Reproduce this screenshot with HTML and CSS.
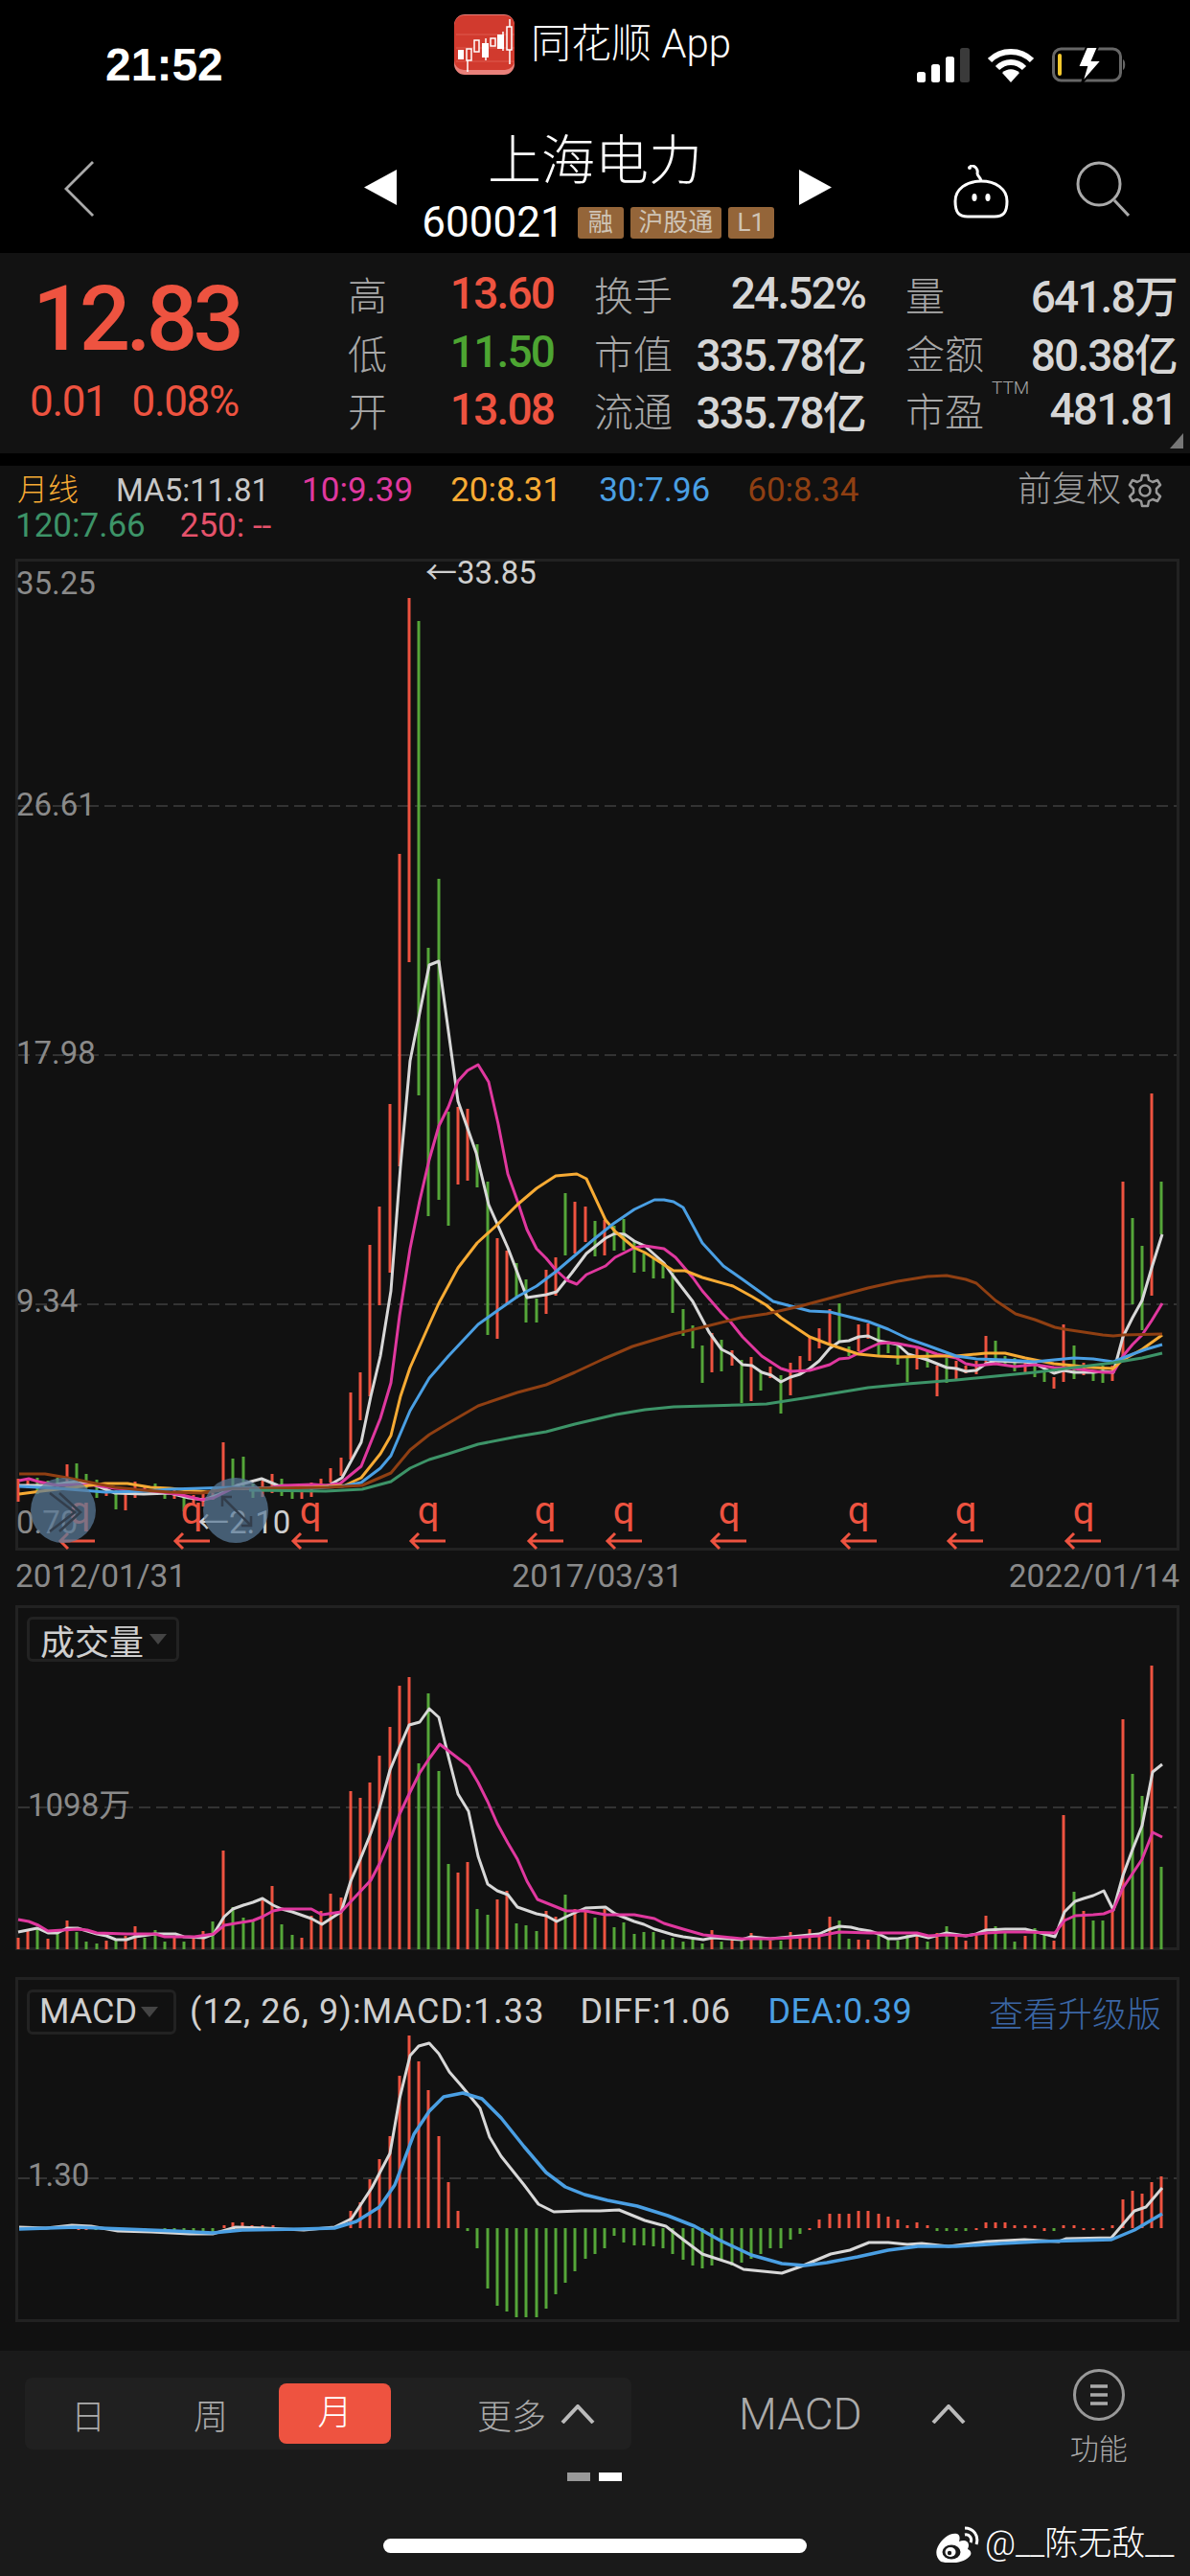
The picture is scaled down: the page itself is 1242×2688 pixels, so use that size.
FILE: index.html
```html
<!DOCTYPE html>
<html lang="zh-CN">
<head>
  <meta charset="UTF-8">
  <title>上海电力</title>
  <link rel="stylesheet" href="styles.css">
</head>
<body>
  <!-- 状态栏 -->
  <div class="status-bar">
    <div class="time">21:52</div>
    <div class="app-name">
      <svg class="app-icon" viewBox="0 0 63 63">
        <rect width="63" height="63" rx="11" fill="#e9807a"/>
        <rect y="1" width="63" height="57" rx="10" fill="#d13a2e"/>
        <path d="M2 35H63M2 21H63M2 49H63" stroke="#dd5a4e" stroke-width="1"/>
        <path d="M14 42V60M33 25V48M51 18V38M58 5V52" stroke="#fff" stroke-width="1.5"/>
        <rect x="4" y="37" width="6" height="10" fill="#fff"/>
        <rect x="13" y="36" width="5" height="12" fill="#d13a2e" stroke="#fff" stroke-width="1.5"/>
        <rect x="21" y="27" width="5" height="12" fill="#d13a2e" stroke="#fff" stroke-width="1.5"/>
        <rect x="29" y="30" width="7" height="15" fill="#fff"/>
        <rect x="38" y="25" width="5" height="8" fill="#d13a2e" stroke="#fff" stroke-width="1.5"/>
        <rect x="45" y="21" width="7" height="15" fill="#fff"/>
        <rect x="55" y="13" width="5" height="24" fill="#d13a2e" stroke="#fff" stroke-width="1.5"/>
      </svg>
      <span>同花顺 App</span>
    </div>
    <div class="status-icons">
      <svg class="signal" viewBox="0 0 55 36">
        <rect x="0" y="25" width="9" height="11" rx="2.5" fill="#fff"/>
        <rect x="15" y="17" width="9" height="19" rx="2.5" fill="#fff"/>
        <rect x="30" y="9" width="9" height="27" rx="2.5" fill="#fff"/>
        <rect x="45" y="0" width="10" height="36" rx="2.5" fill="#3a3a3a"/>
      </svg>
      <svg class="wifi" viewBox="0 0 48 36">
        <path d="M2 13C14 1 34 1 46 13" fill="none" stroke="#fff" stroke-width="6"/>
        <path d="M10 21C18 13 30 13 38 21" fill="none" stroke="#fff" stroke-width="6"/>
        <path d="M15 26C20 21 28 21 33 26L24 36Z" fill="#fff"/>
      </svg>
      <svg class="battery" viewBox="0 0 78 38">
        <rect x="1.5" y="2" width="70" height="33" rx="8" fill="none" stroke="#666" stroke-width="3"/>
        <rect x="6" y="7" width="4" height="23" rx="2" fill="#f5c92e"/>
        <path d="M74 13C77 14 77 23 74 24Z" fill="#666"/>
        <path d="M36 0H48L42 14H52L31 38L36 21H27Z" fill="#fff" stroke="#000" stroke-width="2"/>
      </svg>
    </div>
  </div>

  <!-- 标题栏 -->
  <div class="nav-bar">
    <div class="nav-left">
      <svg class="back" viewBox="0 0 32 60"><path d="M31 1L2 30L31 59" fill="none" stroke="#aaa" stroke-width="3"/></svg>
    </div>
    <div class="nav-center">
      <svg class="switch" viewBox="0 0 34 37"><path d="M34 0V37L0 18.5Z" fill="#fff"/></svg>
      <div class="stock">
        <div class="stock-name">上海电力</div>
        <div class="stock-code">
          <span class="code">600021</span>
          <span class="tag">融</span><span class="tag tag-wide">沪股通</span><span class="tag">L1</span>
        </div>
      </div>
      <svg class="switch" viewBox="0 0 34 37"><path d="M0 0V37L34 18.5Z" fill="#fff"/></svg>
    </div>
    <div class="nav-right">
      <svg class="robot" viewBox="0 0 60 56">
        <path d="M18 1C24 0 27 5 26 9C26 12 30 13 30 17" fill="none" stroke="#fff" stroke-width="3"/>
        <circle cx="18" cy="3" r="2" fill="#fff"/>
        <path d="M3 38C3 25 15 17 30 17C45 17 57 25 57 38C57 50 53 54 44 54H16C7 54 3 50 3 38Z" fill="none" stroke="#fff" stroke-width="3"/>
        <ellipse cx="23" cy="34" rx="2.6" ry="4" fill="#fff"/>
        <ellipse cx="37" cy="34" rx="2.6" ry="4" fill="#fff"/>
      </svg>
      <svg class="search" viewBox="0 0 56 58">
        <circle cx="24" cy="24" r="22" fill="none" stroke="#aaa" stroke-width="3"/>
        <path d="M40 41L55 57" stroke="#aaa" stroke-width="3"/>
      </svg>
    </div>
  </div>

  <!-- 报价 -->
  <div class="quote">
    <div class="price-box">
      <div class="price">12.83</div>
      <div class="change"><span>0.01</span><span>0.08%</span></div>
    </div>
    <div class="stats">
      <div class="stat stat-short"><span class="stat-label">高</span><span class="stat-value up">13.60</span></div>
      <div class="stat"><span class="stat-label">换手</span><span class="stat-value">24.52%</span></div>
      <div class="stat"><span class="stat-label">量</span><span class="stat-value">641.8万</span></div>
      <div class="stat stat-short"><span class="stat-label">低</span><span class="stat-value down">11.50</span></div>
      <div class="stat"><span class="stat-label">市值</span><span class="stat-value">335.78亿</span></div>
      <div class="stat"><span class="stat-label">金额</span><span class="stat-value">80.38亿</span></div>
      <div class="stat stat-short"><span class="stat-label">开</span><span class="stat-value up">13.08</span></div>
      <div class="stat"><span class="stat-label">流通</span><span class="stat-value">335.78亿</span></div>
      <div class="stat"><span class="stat-label">市盈<sup class="ttm">TTM</sup></span><span class="stat-value">481.81</span></div>
    </div>
    <div class="corner"></div>
  </div>

  <div class="chart-area">
    <!-- 均线图例 -->
    <div class="legend">
      <div class="legend-row">
        <span class="legend-type">月线</span>
        <span class="ma5">MA5:11.81</span>
        <span class="ma10">10:9.39</span>
        <span class="ma20">20:8.31</span>
        <span class="ma30">30:7.96</span>
        <span class="ma60">60:8.34</span>
        <span class="adjust">前复权
          <svg class="gear" viewBox="0 0 36 36">
            <path d="M15 2H21L22 7L26 9L31 7L34 12L30 16V20L34 24L31 29L26 27L22 29L21 34H15L14 29L10 27L5 29L2 24L6 20V16L2 12L5 7L10 9L14 7Z" fill="none" stroke="#999" stroke-width="2.5" stroke-linejoin="round"/>
            <circle cx="18" cy="18" r="5.5" fill="none" stroke="#999" stroke-width="2.5"/>
          </svg>
        </span>
      </div>
      <div class="legend-row">
        <span class="ma120">120:7.66</span>
        <span class="ma250">250: --</span>
      </div>
    </div>

    <!-- K线主图 -->
    <div class="frame frame-main">
      <svg class="plot" width="1209" height="1029" viewBox="19 586 1209 1029">
        <path class="grid-line" d="M19 841H1228M19 1101H1228M19 1361H1228"/>
        <path class="bars-up" d="M19 1543V1567M29 1545V1553M70 1528V1552M111 1550V1561M131 1558V1576M141 1546V1563M151 1550V1556M182 1555V1564M202 1560V1570M212 1558V1572M222 1558V1565M233 1505V1555M274 1545V1562M284 1538V1558M315 1557V1564M325 1547V1562M335 1543V1553M345 1532V1547M356 1521V1540M366 1453V1523M376 1432V1482M386 1299V1457M396 1259V1362M407 1152V1328M417 891V1217M427 624V1004M478 1155V1236M488 1157V1232M519 1292V1397M529 1305V1360M570 1325V1371M580 1312V1352M600 1254V1308M611 1259V1296M631 1273V1310M743 1391V1432M764 1409V1425M784 1416V1462M804 1426V1438M825 1422V1456M835 1415V1435M845 1395V1420M855 1386V1407M866 1366V1402M896 1382V1410M906 1381V1397M957 1407V1429M978 1425V1457M998 1420V1439M1008 1425V1433M1019 1420V1434M1029 1394V1425M1070 1422V1432M1100 1437V1449M1110 1382V1442M1131 1422V1435M1161 1425V1441M1172 1233V1420M1202 1141V1352"/>
        <path class="bars-down" d="M39 1542V1559M50 1545V1556M60 1542V1552M80 1527V1550M90 1538V1553M101 1544V1563M121 1555V1575M162 1548V1558M172 1555V1564M192 1562V1577M243 1522V1553M254 1520V1555M264 1548V1563M294 1543V1561M305 1555V1564M437 648V1143M447 989V1269M458 917V1252M468 1160V1279M498 1194V1239M509 1233V1393M539 1318V1355M549 1335V1380M560 1355V1380M590 1245V1310M621 1274V1311M641 1279V1305M651 1272V1305M662 1295V1328M672 1308V1327M682 1313V1334M692 1318V1334M702 1328V1370M713 1366V1394M723 1383V1407M733 1404V1443M753 1398V1431M774 1419V1464M794 1430V1451M815 1435V1475M876 1360V1399M886 1405V1415M917 1385V1415M927 1400V1412M937 1404V1424M947 1417V1442M968 1410V1427M988 1417V1443M1039 1399V1420M1049 1415V1425M1059 1417V1431M1080 1420V1437M1090 1430V1442M1121 1404V1439M1141 1430V1441M1151 1425V1443M1182 1271V1361M1192 1300V1388M1212 1233V1288"/>
        <polyline class="line line-ma5" points="20,1550 53,1550 70,1547 83,1546 100,1550 120,1558 150,1559 177,1558 197,1563 213,1565 227,1560 247,1550 273,1543 290,1550 310,1551 343,1550 357,1542 377,1505 387,1457 397,1415 408,1347 418,1217 428,1107 448,1007 458,1003 478,1149 497,1203 510,1257 530,1302 550,1354 570,1351 581,1348 597,1328 612,1308 632,1292 642,1287 652,1288 662,1295 673,1300 693,1318 703,1332 723,1358 740,1390 753,1408 763,1413 775,1424 785,1425 795,1432 805,1435 815,1442 825,1437 835,1434 845,1428 855,1420 866,1407 876,1400 886,1399 896,1395 906,1394 917,1399 937,1403 948,1413 968,1419 978,1423 988,1427 998,1428 1008,1431 1019,1430 1029,1423 1039,1420 1059,1421 1070,1421 1080,1423 1090,1428 1100,1433 1110,1430 1121,1432 1141,1432 1151,1431 1162,1432 1172,1395 1182,1375 1192,1357 1202,1323 1213,1288"/>
        <polyline class="line line-ma10" points="20,1545 30,1543 40,1546 60,1550 80,1549 100,1550 120,1553 150,1555 170,1557 190,1560 210,1565 223,1563 243,1553 277,1553 297,1550 327,1549 340,1550 355,1548 377,1530 397,1480 408,1443 417,1373 428,1303 438,1253 448,1210 458,1175 468,1155 478,1128 488,1117 499,1111 510,1129 520,1173 530,1225 540,1253 550,1283 560,1303 570,1313 580,1325 592,1336 602,1340 612,1330 632,1321 642,1312 662,1302 673,1300 693,1303 705,1312 723,1333 733,1347 753,1370 763,1380 775,1395 795,1415 815,1428 825,1431 845,1430 866,1424 876,1418 886,1417 896,1412 906,1407 917,1402 927,1401 937,1402 958,1406 978,1413 998,1417 1008,1423 1019,1425 1039,1423 1059,1426 1080,1424 1100,1427 1121,1428 1151,1432 1162,1432 1172,1415 1182,1403 1192,1393 1202,1378 1213,1360"/>
        <polyline class="line line-ma20" points="20,1559 43,1556 77,1552 110,1548 133,1548 157,1552 177,1553 197,1555 217,1557 237,1553 277,1553 327,1552 360,1550 377,1542 397,1517 408,1498 418,1457 428,1427 448,1382 458,1360 478,1323 498,1297 520,1277 540,1257 560,1240 580,1227 602,1225 612,1230 632,1273 642,1285 662,1302 673,1307 703,1326 715,1326 733,1333 765,1342 785,1353 800,1362 815,1375 845,1395 866,1403 896,1413 917,1415 937,1416 978,1415 998,1415 1019,1413 1029,1412 1049,1412 1070,1417 1100,1423 1121,1425 1141,1427 1162,1428 1172,1419 1192,1408 1213,1393"/>
        <polyline class="line line-ma30" points="20,1551 60,1553 110,1557 150,1556 177,1554 210,1553 243,1552 277,1553 327,1553 357,1551 377,1547 397,1532 408,1519 428,1472 448,1438 468,1415 499,1382 520,1367 540,1353 560,1342 580,1327 600,1310 620,1293 640,1277 662,1262 683,1252 693,1252 703,1254 713,1260 733,1297 755,1321 775,1335 800,1353 807,1358 845,1368 866,1369 906,1379 927,1387 948,1397 968,1404 998,1415 1019,1418 1049,1419 1080,1421 1100,1419 1121,1417 1141,1418 1162,1421 1182,1413 1196,1408 1213,1403"/>
        <polyline class="line line-ma60" points="20,1538 47,1538 70,1542 100,1548 120,1552 150,1555 177,1557 210,1558 243,1553 277,1553 343,1552 378,1550 408,1537 428,1513 448,1497 468,1485 499,1467 540,1453 570,1445 600,1432 630,1418 660,1405 703,1392 733,1385 773,1375 800,1371 835,1363 876,1352 906,1344 937,1337 968,1332 988,1331 1008,1335 1019,1339 1039,1357 1060,1371 1080,1377 1101,1385 1111,1387 1131,1390 1151,1393 1162,1394 1172,1393 1213,1392"/>
        <polyline class="line line-ma120" points="260,1555 340,1556 378,1554 408,1546 428,1532 448,1523 468,1517 499,1507 540,1499 570,1494 600,1486 643,1476 673,1471 703,1468 773,1466 800,1465 845,1458 906,1448 947,1444 998,1440 1039,1436 1080,1432 1121,1427 1162,1422 1192,1417 1213,1412"/>

        <text class="axis" x="17" y="620">35.25</text>
        <text class="axis" x="17" y="851">26.61</text>
        <text class="axis" x="17" y="1110">17.98</text>
        <text class="axis" x="17" y="1369">9.34</text>
        <text class="axis" x="17" y="1600">0.70</text>
        <text class="extreme" x="444" y="609">←33.85</text>
        <text class="extreme" x="206" y="1600">←2.10</text>

        <g class="mark">
          <text x="83" y="1590">q</text><text x="200" y="1590">q</text><text x="324" y="1590">q</text><text x="447" y="1590">q</text><text x="569" y="1590">q</text>
          <text x="651" y="1590">q</text><text x="761" y="1590">q</text><text x="896" y="1590">q</text><text x="1008" y="1590">q</text><text x="1131" y="1590">q</text>
        </g>
        <path class="mark-arrows" d="M63 1608H99M71 1600L63 1608L71 1616M183 1608H219M191 1600L183 1608L191 1616M306 1608H342M314 1600L306 1608L314 1616M429 1608H465M437 1600L429 1608L437 1616M552 1608H588M560 1600L552 1608L560 1616M634 1608H670M642 1600L634 1608L642 1616M743 1608H779M751 1600L743 1608L751 1616M879 1608H915M887 1600L879 1608L887 1616M990 1608H1026M998 1600L990 1608L998 1616M1113 1608H1149M1121 1600L1113 1608L1121 1616"/>

        <!-- 两个悬浮按钮 -->
        <circle class="float-btn" cx="66" cy="1576" r="34"/>
        <path class="float-icon" d="M52 1558L78 1578L52 1598M62 1558L84 1578L62 1598"/>
        <circle class="float-btn" cx="246" cy="1576" r="34"/>
        <path class="float-icon" d="M232 1562L262 1592M232 1572V1562H242M262 1582V1592H252"/>
      </svg>
    </div>

    <div class="dates">
      <span>2012/01/31</span>
      <span>2017/03/31</span>
      <span>2022/01/14</span>
    </div>

    <!-- 成交量 -->
    <div class="frame frame-volume">
      <div class="picker picker-volume">成交量<i class="picker-arrow"></i></div>
      <svg class="plot" width="1209" height="354" viewBox="19 1678 1209 354">
        <path class="grid-line" d="M19 1886H1228"/>
        <path class="bars-up vol" d="M19 2022V2034M29 2015V2034M50 2023V2034M70 2004V2034M111 2025V2034M131 2020V2034M141 2010V2034M182 2022V2034M202 2023V2034M212 2015V2034M233 1931V2034M274 1983V2034M284 1968V2034M315 2022V2034M325 1999V2034M335 1994V2034M345 1976V2034M356 1980V2034M366 1869V2034M376 1876V2034M386 1860V2034M396 1832V2034M407 1802V2034M417 1759V2034M427 1750V2034M478 1954V2034M488 1943V2034M519 1982V2034M529 1973V2034M570 1994V2034M580 2000V2034M600 1992V2034M611 1993V2034M631 1992V2034M743 2014V2034M764 2024V2034M784 2017V2034M804 2025V2034M825 2016V2034M835 2020V2034M845 2013V2034M855 2019V2034M866 2000V2034M896 2024V2034M906 2024V2034M957 2019V2034M978 2017V2034M998 2020V2034M1008 2025V2034M1019 2020V2034M1029 1999V2034M1070 2020V2034M1100 2025V2034M1110 1894V2034M1131 1994V2034M1161 1994V2034M1172 1794V2034M1202 1738V2034"/>
        <path class="bars-down vol" d="M39 2012V2034M60 2017V2034M80 2016V2034M90 2026V2034M101 2028V2034M121 2023V2034M151 2022V2034M162 2014V2034M172 2026V2034M192 2026V2034M222 2005V2034M243 1990V2034M254 2001V2034M264 2005V2034M294 2008V2034M305 2019V2034M437 1840V2034M447 1767V2034M458 1848V2034M468 1945V2034M498 1992V2034M509 1998V2034M539 2007V2034M549 2009V2034M560 2015V2034M590 1977V2034M621 2001V2034M641 2011V2034M651 2006V2034M662 2018V2034M672 2016V2034M682 2016V2034M692 2024V2034M702 2022V2034M713 2026V2034M723 2022V2034M733 2028V2034M753 2026V2034M774 2024V2034M794 2024V2034M815 2025V2034M876 2004V2034M886 2023V2034M917 2017V2034M927 2023V2034M937 2025V2034M947 2019V2034M968 2026V2034M988 2010V2034M1039 2010V2034M1049 2016V2034M1059 2026V2034M1080 2012V2034M1090 2019V2034M1121 1974V2034M1141 2004V2034M1151 2004V2034M1182 1851V2034M1192 1874V2034M1212 1948V2034"/>
        <polyline class="line line-ma5" points="19,2016 39,2012 50,2017 60,2017 70,2012 81,2012 101,2018 111,2020 121,2024 132,2024 141,2021 162,2018 183,2018 192,2021 213,2022 223,2018 234,2000 243,1992 254,1988 264,1985 274,1981 285,1988 294,1992 305,1995 325,2002 336,2008 356,1995 366,1963 376,1940 387,1913 396,1887 407,1847 417,1823 427,1800 438,1797 448,1783 458,1792 468,1833 478,1872 489,1890 499,1937 509,1966 519,1973 530,1977 540,1990 560,1997 570,1999 581,2005 591,2000 611,1991 632,1990 642,1997 662,2005 672,2008 683,2013 703,2019 713,2021 734,2024 744,2022 760,2023 774,2024 784,2021 804,2023 825,2021 855,2018 866,2013 876,2010 888,2011 896,2013 908,2015 917,2018 927,2023 937,2023 957,2019 969,2022 988,2017 1008,2020 1019,2018 1029,2014 1049,2013 1070,2013 1090,2018 1101,2021 1111,1995 1122,1984 1131,1981 1141,1978 1152,1973 1162,1993 1172,1957 1182,1930 1192,1905 1203,1849 1213,1841"/>
        <polyline class="line line-ma10" points="19,2003 30,2005 40,2009 50,2015 81,2013 91,2014 101,2017 132,2018 162,2018 172,2021 203,2021 223,2018 234,2009 264,2004 274,2000 285,1994 295,1992 325,1992 336,1998 356,1995 387,1962 397,1943 407,1920 417,1893 428,1870 438,1850 448,1835 459,1820 489,1843 499,1860 509,1880 519,1903 530,1923 540,1940 550,1963 561,1982 591,1994 611,1994 632,1998 662,1998 683,2002 693,2007 713,2013 734,2019 754,2021 774,2023 804,2023 825,2022 855,2020 876,2016 908,2017 937,2017 957,2017 969,2020 988,2019 1008,2020 1029,2017 1049,2016 1070,2016 1101,2017 1111,2004 1122,1999 1141,1998 1152,1997 1162,1993 1172,1970 1182,1955 1192,1940 1203,1912 1213,1917"/>
        <text class="axis" x="29" y="1895">1098万</text>
      </svg>
    </div>

    <!-- MACD -->
    <div class="frame frame-macd">
      <div class="macd-head">
        <div class="picker picker-macd">MACD<i class="picker-arrow"></i></div>
        <span class="macd-text">(12, 26, 9):MACD:1.33</span>
        <span class="macd-text macd-diff">DIFF:1.06</span>
        <span class="macd-text macd-dea">DEA:0.39</span>
        <span class="macd-link">查看升级版</span>
      </div>
      <svg class="plot" width="1209" height="354" viewBox="19 2066 1209 354">
        <path class="grid-line" d="M19 2273H1228"/>
        <path class="bars-up thin" d="M82 2322V2327M90 2322V2327M234 2322V2325M243 2319V2325M253 2319V2325M263 2322V2325M274 2322V2325M285 2322V2325M366 2307V2325M376 2298V2325M386 2274V2325M396 2253V2325M407 2229V2325M417 2166V2325M427 2124V2325M437 2151V2325M447 2181V2325M458 2229V2325M468 2277V2325M478 2307V2325M845 2325V2327M855 2316V2325M866 2310V2325M876 2310V2325M886 2310V2325M896 2307V2325M906 2307V2325M917 2310V2325M927 2313V2325M937 2316V2325M947 2322V2325M957 2319V2325M968 2322V2325M1019 2325V2327M1029 2319V2325M1039 2319V2325M1049 2319V2325M1059 2322V2325M1070 2322V2325M1080 2322V2325M1090 2325V2328M1110 2322V2325M1121 2322V2325M1131 2325V2327M1141 2325V2327M1151 2325V2327M1161 2322V2325M1172 2295V2325M1182 2286V2325M1192 2289V2325M1202 2277V2325M1212 2271V2325"/>
        <path class="bars-down thin" d="M100 2325V2327M131 2325V2327M151 2325V2328M172 2325V2328M182 2325V2328M192 2325V2328M202 2325V2328M212 2325V2329M222 2325V2329M488 2325V2328M498 2325V2346M509 2325V2388M519 2325V2406M529 2325V2412M539 2325V2418M549 2325V2418M560 2325V2418M570 2325V2409M580 2325V2394M590 2325V2382M600 2325V2370M611 2325V2357M621 2325V2352M631 2325V2346M641 2325V2333M651 2325V2340M662 2325V2343M672 2325V2343M682 2325V2344M692 2325V2346M702 2325V2352M713 2325V2358M723 2325V2364M733 2325V2367M743 2325V2364M753 2325V2358M764 2325V2364M774 2325V2361M784 2325V2357M794 2325V2352M804 2325V2346M815 2325V2346M825 2325V2337M835 2325V2331M978 2325V2328M988 2325V2328M998 2325V2328M1008 2325V2328M1100 2325V2328"/>
        <polyline class="line line-ma5" points="20,2324 48,2325 75,2322 95,2323 123,2328 158,2329 198,2331 222,2331 246,2324 277,2325 317,2327 349,2324 367,2315 388,2283 407,2247 417,2190 428,2145 437,2135 448,2132 458,2143 469,2162 482,2177 501,2200 511,2230 523,2250 547,2280 562,2300 578,2308 606,2307 626,2307 646,2306 673,2317 695,2323 713,2337 733,2352 764,2362 776,2368 816,2372 836,2365 867,2352 887,2348 907,2340 927,2340 947,2342 962,2341 990,2344 1030,2339 1069,2337 1105,2339 1113,2336 1160,2335 1184,2307 1196,2303 1213,2283"/>
        <polyline class="line line-ma30 macd-dea-line" points="20,2326 79,2324 131,2326 182,2328 222,2330 253,2327 313,2326 349,2325 372,2318 396,2303 412,2280 432,2227 448,2203 463,2188 483,2184 503,2190 523,2210 547,2240 570,2267 590,2282 610,2290 634,2296 665,2302 697,2312 725,2323 752,2338 784,2353 816,2362 840,2364 863,2361 895,2355 927,2348 958,2344 998,2344 1046,2341 1085,2339 1160,2337 1184,2327 1213,2310"/>
        <text class="axis" x="29" y="2281">1.30</text>
      </svg>
    </div>
  </div>

  <!-- 底部工具栏 -->
  <div class="toolbar">
    <div class="toolbar-row">
      <div class="periods">
        <span class="period period-day">日</span>
        <span class="period period-week">周</span>
        <span class="period period-active">月</span>
        <span class="period period-more">更多
          <svg class="caret" viewBox="0 0 36 20"><path d="M2 19L18 2L34 19" fill="none" stroke="#bbb" stroke-width="4"/></svg>
        </span>
      </div>
      <div class="indicator">
        <span>MACD</span>
        <svg class="caret" viewBox="0 0 36 20"><path d="M2 19L18 2L34 19" fill="none" stroke="#bbb" stroke-width="4"/></svg>
      </div>
      <div class="func">
        <svg class="func-icon" viewBox="0 0 54 54">
          <circle cx="27" cy="27" r="25.5" fill="none" stroke="#999" stroke-width="3"/>
          <path d="M18 18H36M18 27H36M18 36H36" stroke="#aaa" stroke-width="3.5"/>
        </svg>
        <span>功能</span>
      </div>
    </div>
    <div class="pager"><i></i><i class="pager-on"></i></div>
    <div class="home-bar"></div>
    <div class="watermark">
      <svg class="weibo" viewBox="0 0 46 38">
        <path d="M6 37C1 33 0 27 3 21C7 13 16 6 23 8C26 9 26 13 25 16C30 14 35 15 35 20C35 22 34 23 34 24C37 25 38 28 37 30C34 36 20 41 6 37Z" fill="#fff"/>
        <ellipse cx="17" cy="27" rx="9.5" ry="7.5" fill="#1a1a1a"/>
        <ellipse cx="16" cy="27" rx="5.5" ry="5" fill="#fff"/>
        <circle cx="15" cy="28" r="2.2" fill="#1a1a1a"/>
        <path d="M31 2C40 2 46 10 43 19M31 9C36 8 39 13 37 17" fill="none" stroke="#fff" stroke-width="3"/>
      </svg>
      <span>@__陈无敌__</span>
    </div>
  </div>
</body>
</html>
```

FILE: styles.css
```css
/* 基本样式 */
* {
  box-sizing: border-box;
}
body {
  margin: 0;
  width: 1242px;
  height: 2688px;
  overflow: hidden;
  background-color: #000;
  color: #fff;
  font-family: Roboto, "Noto Sans CJK SC", sans-serif;
}
svg {
  display: block;
}

/* 状态栏 */
.status-bar {
  display: flex;
  height: 100px;
}
.time {
  width: 474px;
  padding: 40px 0 0 110px;
  font-family: "Liberation Sans", sans-serif;
  font-size: 48px;
  font-weight: 700;
  line-height: 56px;
}
.app-name {
  display: flex;
  width: 483px;
  gap: 17px;
  padding-top: 15px;
  font-size: 42px;
  line-height: 62px;
  font-weight: 300;
}
.app-icon {
  width: 63px;
  height: 63px;
}
.status-icons {
  display: flex;
  gap: 19px;
  padding-top: 50px;
}
.signal {
  width: 55px;
  height: 36px;
}
.wifi {
  width: 48px;
  height: 36px;
}
.battery {
  width: 78px;
  height: 38px;
  margin-top: -1px;
}

/* 标题栏 */
.nav-bar {
  display: grid;
  grid-template-columns: 380px 488px 374px;
  height: 164px;
}
.nav-left {
  padding: 67px 0 0 67px;
}
.back {
  width: 31px;
  height: 60px;
}
.nav-center {
  display: flex;
  justify-content: space-between;
}
.switch {
  width: 34px;
  height: 37px;
  margin-top: 77px;
}
.stock {
  text-align: center;
}
.stock-name {
  margin-top: 28px;
  padding-right: 6px;
  font-size: 56px;
  line-height: 80px;
  font-weight: 300;
}
.stock-code {
  display: flex;
  align-items: center;
  margin-top: 8px;
  gap: 7px;
}
.code {
  margin-right: 7px;
  font-size: 44px;
  line-height: 33px;
}
.tag {
  width: 48px;
  height: 33px;
  border-radius: 3px;
  background-color: #946539;
  color: #cfc4b6;
  font-size: 26px;
  line-height: 33px;
  text-align: center;
}
.tag-wide {
  width: 95px;
}
.nav-right {
  display: flex;
  gap: 69px;
  padding: 68px 0 0 126px;
}
.robot {
  width: 60px;
  height: 56px;
  margin-top: 4px;
}
.search {
  width: 56px;
  height: 58px;
}

/* 报价 */
.quote {
  position: relative;
  display: flex;
  height: 209px;
  margin-bottom: 13px;
  background-color: #121212;
}
.price-box {
  width: 363px;
  padding: 19px 0 0 34px;
  color: #ee5340;
}
.price {
  font-size: 94px;
  font-weight: 500;
  line-height: 100px;
  letter-spacing: -.05em;
}
.change {
  display: flex;
  gap: 26px;
  margin-top: 13px;
  margin-left: -3px;
  font-size: 44px;
  line-height: 46px;
  letter-spacing: -.03em;
}
.stats {
  display: grid;
  grid-template-columns: 215px 283px 283px;
  grid-auto-rows: 60.5px;
  column-gap: 42px;
  padding-top: 12px;
}
.stat {
  display: flex;
  justify-content: space-between;
  align-items: center;
}
.stat-label {
  position: relative;
  color: #a8a8a8;
  font-size: 41px;
  font-weight: 300;
}
.stat-value {
  color: #d6d6d6;
  font-size: 46px;
  font-weight: 500;
  letter-spacing: -.04em;
}
.up {
  color: #ee5340;
}
.down {
  color: #4da532;
}
.ttm {
  position: absolute;
  top: -3px;
  left: 90px;
  font-size: 19px;
  line-height: 22px;
  letter-spacing: 0;
}
.corner {
  position: absolute;
  right: 7px;
  bottom: 5px;
  width: 0;
  height: 0;
  border-left: 14px solid transparent;
  border-bottom: 16px solid #777;
}

/* 均线图例 */
.chart-area {
  height: 1967px;
  padding: 0 11px 0 16px;
  background-color: #111;
}
.legend {
  height: 97px;
  padding-top: 7px;
  font-size: 35px;
}
.legend-row {
  display: flex;
  gap: 39px;
  height: 37px;
  line-height: 37px;
  white-space: nowrap;
}
.legend-type {
  width: 65px;
  margin-right: -1px;
  margin-left: 2px;
  color: #f7ab34;
  font-size: 32px;
  font-weight: 300;
}
.ma5 {
  margin-right: -5px;
  color: #c8c8c8;
  font-size: 33px;
}
.ma10 { color: #e0389f; }
.ma20 { color: #f7ab34; }
.ma30 { color: #4a9fe3; }
.ma60 { color: #8f3f12; }
.ma120 {
  margin-right: -3px;
  color: #3d9468;
}
.ma250 { color: #e5526b; }
.adjust {
  display: flex;
  align-items: center;
  gap: 7px;
  margin-left: auto;
  margin-right: 18px;
  color: #a0a0a0;
  font-size: 36px;
  font-weight: 300;
}
.gear {
  width: 36px;
  height: 36px;
}

/* 图表外框 */
.frame {
  position: relative;
  width: 1215px;
  border: 3px solid #222;
}
.frame-main {
  height: 1035px;
}
.frame-volume {
  height: 360px;
}
.frame-macd {
  height: 360px;
  margin-top: 28px;
}
.plot {
  overflow: visible;
}
.grid-line {
  fill: none;
  stroke: #333;
  stroke-width: 2;
  stroke-dasharray: 12 6;
}
.bars-up,
.bars-down {
  fill: none;
  stroke-width: 3;
}
.bars-up {
  stroke: #ee5340;
}
.bars-down {
  stroke: #55a639;
}
.line {
  fill: none;
  stroke-width: 3;
  stroke-linejoin: round;
}
.line-ma5 { stroke: #d8d8d8; }
.line-ma10 { stroke: #e0389f; }
.line-ma20 { stroke: #f7ab34; }
.line-ma30 { stroke: #4a9fe3; }
.line-ma60 { stroke: #8f3f12; }
.line-ma120 { stroke: #3d9468; }
.macd-dea-line {
  stroke-width: 3.5;
}
.axis {
  fill: #8a8a8a;
  font-size: 33px;
}
.extreme {
  fill: #cfcfcf;
  font-size: 33px;
}
.mark text {
  fill: #ee5340;
  font-size: 40px;
  text-anchor: middle;
}
.mark-arrows {
  fill: none;
  stroke: #ee5340;
  stroke-width: 3;
}
.float-btn {
  fill: #5a7c9a;
  opacity: .72;
}
.float-icon {
  fill: none;
  stroke: #333e4c;
  stroke-width: 2.5;
}

/* 日期 */
.dates {
  display: flex;
  justify-content: space-between;
  width: 1215px;
  height: 57px;
  padding-top: 7px;
  color: #8a8a8a;
  font-size: 33.5px;
  line-height: 40px;
}

/* 指标选择 */
.picker {
  position: absolute;
  display: flex;
  align-items: center;
  border: 3px solid #222;
  border-radius: 6px;
  color: #cfcfcf;
  font-size: 36px;
}
.picker-volume {
  top: 9px;
  left: 9px;
  gap: 6px;
  width: 159px;
  height: 47px;
  padding-left: 11px;
}
.picker-macd {
  position: static;
  flex: none;
  gap: 4px;
  width: 156px;
  height: 47px;
  padding-left: 10px;
}
.picker-arrow {
  width: 0;
  height: 0;
  border-left: 9px solid transparent;
  border-right: 9px solid transparent;
  border-top: 11px solid #444;
}
.macd-head {
  position: absolute;
  top: 7px;
  left: 9px;
  right: 16px;
  display: flex;
  align-items: center;
  white-space: nowrap;
}
.macd-text {
  margin-left: 14px;
  color: #cfcfcf;
  font-size: 36px;
  letter-spacing: .03em;
}
.macd-diff {
  margin-left: 37px;
  letter-spacing: .015em;
}
.macd-dea {
  margin-left: 39px;
  color: #4a9fe3;
  letter-spacing: .015em;
}
.macd-link {
  margin-left: auto;
  color: #3b66a5;
  font-size: 36px;
  font-weight: 300;
}

/* 底部工具栏 */
.toolbar {
  position: relative;
  height: 235px;
  background-color: #1a1a1a;
}
.toolbar-row {
  display: flex;
  height: 127px;
  padding-top: 19px;
}
.periods {
  display: flex;
  align-items: center;
  width: 633px;
  height: 75px;
  margin: 9px 0 0 26px;
  border-radius: 8px;
  background-color: #202020;
  color: #aaa;
  font-size: 36px;
  font-weight: 300;
}
.period {
  text-align: center;
}
.period-day {
  width: 132px;
}
.period-week {
  width: 124px;
}
.period-active {
  width: 117px;
  height: 63px;
  margin-left: 9px;
  border-radius: 8px;
  background-color: #ee5340;
  color: #fff;
  line-height: 63px;
}
.period-more {
  display: flex;
  align-items: center;
  gap: 15px;
  margin-left: 90px;
}
.caret {
  width: 36px;
  height: 20px;
}
.indicator {
  display: flex;
  align-items: center;
  gap: 72px;
  height: 75px;
  margin: 9px 0 0 112px;
  color: #aaa;
  font-size: 46px;
  font-weight: 300;
}
.func {
  margin-left: 109px;
  color: #aaa;
  font-size: 30px;
  line-height: 36px;
  font-weight: 300;
  text-align: center;
}
.func-icon {
  width: 54px;
  height: 54px;
  margin: 0 auto 12px;
}
.pager {
  display: flex;
  justify-content: center;
  gap: 9px;
  height: 69px;
  padding-right: 1px;
}
.pager i {
  width: 24px;
  height: 9px;
  background-color: #999;
}
.pager i.pager-on {
  background-color: #fff;
}
.home-bar {
  width: 442px;
  height: 15px;
  margin-left: 400px;
  border-radius: 8px;
  background-color: #fff;
}
.watermark {
  position: absolute;
  top: 182px;
  left: 976px;
  display: flex;
  gap: 6px;
  align-items: center;
  font-size: 35px;
  line-height: 40px;
  font-weight: 300;
}
.weibo {
  width: 46px;
  height: 38px;
}
```
